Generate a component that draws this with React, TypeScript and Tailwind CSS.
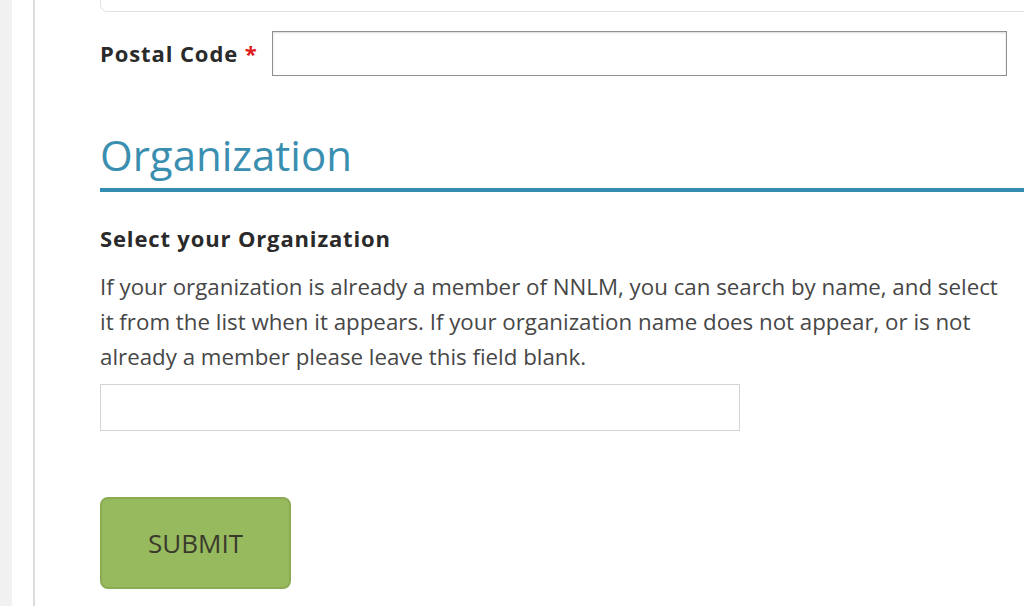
export default function App() {
  return (
    <div className="flex h-[606px] w-[1024px] overflow-hidden bg-white font-['Open_Sans',sans-serif] text-[#333]">
      <div className="w-[12px] shrink-0 bg-[#f1f1f1]" />
      <div className="w-[21px] shrink-0 bg-white" />
      <div className="w-[2px] shrink-0 bg-[#dcdcdc]" />

      <div className="flex-1 pl-[65px]">
        {/* tail of the field above */}
        <div className="-mt-[20px] mr-[-20px] h-[32px] rounded-b-[7px] border border-[#dde2e6] bg-white" />

        <div className="mt-[19px] flex items-center pr-[17px]">
          <label className="w-[172px] shrink-0 text-[22px] font-bold tracking-[0.9px] text-[#2a2a2a]">
            Postal Code <span className="text-[#e01b1b]">*</span>
          </label>
          <input
            type="text"
            className="h-[45px] flex-1 border border-[#8f8f8f] bg-white shadow-[inset_0_1px_2px_rgba(0,0,0,0.15)] outline-none"
          />
        </div>

        <h2 className="mt-[55px] text-[42px] leading-[48px] font-normal text-[#3a8fb0]">
          Organization
        </h2>
        <div className="mt-[9px] h-[4px] bg-[#338db0]" />

        <h3 className="mt-[31px] text-[22px] leading-[30px] font-bold tracking-[0.85px] text-[#2a2a2a]">
          Select your Organization
        </h3>
        <p className="mt-[16px] w-[912px] text-[22.3px] leading-[35px] text-[#474747]">
          If your organization is already a member of NNLM, you can search by name, and select it from
          the list when it appears. If your organization name does not appear, or is not already a
          member please leave this field blank.
        </p>

        <input
          type="text"
          className="mt-[10px] block h-[47px] w-[640px] border border-[#d4d4d4] bg-white outline-none"
        />

        <button
          type="button"
          className="mt-[66px] flex h-[92px] w-[191px] items-center justify-center rounded-[8px] border-2 border-[#8aab54] bg-[#98ba5f] text-[26px] text-[#3a3a2c]"
        >
          SUBMIT
        </button>
      </div>
    </div>
  )
}
